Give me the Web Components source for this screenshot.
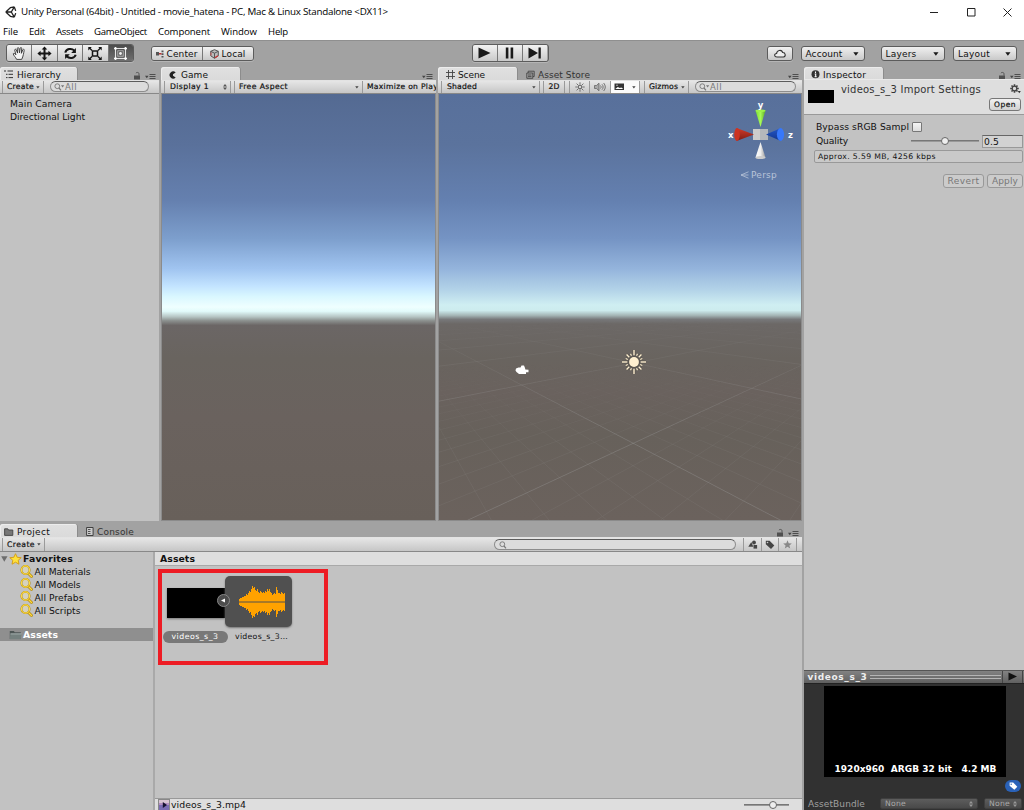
<!DOCTYPE html>
<html lang="en">
<head>
<meta charset="utf-8">
<title>Unity Personal (64bit)</title>
<style>
html,body{margin:0;height:100%;overflow:hidden;background:#a2a2a2}
</style>
</head>
<body>
<unity-app></unity-app>
<script>
const NS='*{box-sizing:border-box}';
function define(name,css,html,ready){
  const t=document.createElement('template');
  t.innerHTML='<style>'+NS+css+'</style>'+html;
  customElements.define(name,class extends HTMLElement{
    connectedCallback(){
      if(this.shadowRoot)return;
      this.attachShadow({mode:'open'}).appendChild(t.content.cloneNode(true));
      if(ready)ready(this,this.shadowRoot);
    }
  });
}

/* A label whose tracking is adjusted so that the text fills the width in "w". */
define('fit-text',`
:host{display:block;flex:none;white-space:nowrap;line-height:12px;height:12px;font-family:"DejaVu Sans",Verdana,sans-serif;font-size:9.3px;color:#111}
:host([semi]){-webkit-text-stroke:.2px currentColor}
:host([bold]){font-weight:700}
:host([win]){font-family:"Open Sans","Noto Sans",sans-serif}
span{display:inline-block}`,
'<span><slot></slot></span>',(el,r)=>{
  const s=el.getAttribute('s'),w=+el.getAttribute('w');
  if(s)el.style.fontSize=s+'px';
  if(w){
    el.style.width=w+'px';
    const sp=r.querySelector('span'),n=el.textContent.length;
    const nat=sp.getBoundingClientRect().width;
    if(nat>0)sp.style.letterSpacing=((w-nat)/n).toFixed(3)+'px';
  }
});

/* Icons: [width, height, markup] */
const ICONS={
unity:[12,12,'<path d="M.8 6 5.6 1.6M.8 6l4.8 4.4M.8 6H6.3M6.3 6 9.3.9M6.3 6l3 5.1M9.3.9 5.3 1.7M9.3.9l1.4 4M9.3 11.1l-4-.8M9.3 11.1l1.4-4" fill="none" stroke="#222" stroke-width="1.3"/>'],
hand:[15,15,'<path d="M4.6 13.4C3.700 11 1.300 9.600 1.300 7.700c.9-.9 1.900.1 2.600 1.100L2.700 4c.1-1 1.300-1 1.600-.1l1.300 3.200L5.300 2.400c.2-1 1.400-1 1.600 0l.6 4.400.7-4.700c.3-.9 1.500-.7 1.500.3l-.3 4.900 1.400-3.600c.5-.9 1.600-.4 1.400.6-.5 2.400-.9 5.900-2.500 9.100z" fill="#f4f4f4" stroke="#333" stroke-width=".9"/>'],
move:[15,15,'<path d="M7.5.4 10.300 3.600H8.500V6.500H11.400V4.700L14.600 7.500 11.400 10.300V8.500H8.500V11.400H10.300L7.500 14.600 4.700 11.400H6.500V8.500H3.600V10.300L.4 7.500 3.600 4.700V6.500H6.500V3.600H4.700z" fill="#151515"/>'],
rotate:[15,15,'<path d="M2.300 6.600C3.100 2.800 8.600 1.700 11.300 4.700M12.700 8.800C11.600 12.300 6.500 13.300 3.700 10.300" fill="none" stroke="#151515" stroke-width="2"/><path d="M12.900 2v5H8.200zM2.100 13V8.200h4.700z" fill="#151515"/>'],
scale:[16,15,'<rect x="5.500" y="5" width="5" height="5" fill="#ddd" stroke="#151515" stroke-width="1.500"/><path d="M2 1.500 5 4.500M14 1.500 11 4.500M2 13.500 5 10.500M14 13.500 11 10.500" stroke="#151515" stroke-width="1.300"/><path d="M1.300 1H4.800L1.300 4.500zM14.700 1H11.200L14.700 4.500zM1.300 14H4.800L1.300 10.500zM14.700 14H11.200L14.700 10.500z" fill="#151515"/>'],
rect:[15,15,'<path d="M2.500 1v13M12.500 1v13M1 2.500h13M1 12.500h13" stroke="#e6e6e6" stroke-width="1.100"/><rect x="4.800" y="4.800" width="5.400" height="5.400" fill="none" stroke="#bbb" stroke-width=".8"/><circle cx="7.500" cy="7.500" r="1.400" fill="#f2f2f2"/><g fill="#fff"><circle cx="2.500" cy="2.500" r="1.300"/><circle cx="12.500" cy="2.500" r="1.300"/><circle cx="2.500" cy="12.500" r="1.300"/><circle cx="12.500" cy="12.500" r="1.300"/></g>'],
center:[8,8,'<path d="M0 2h3v3.500H0z" fill="#555"/><path d="M5.500.5h2v1.800h-2zM5.500 3.200h2V5h-2zM5.500 6h2v1.500h-2z" fill="#555"/><path d="M3 3.700h2.500" stroke="#b33" stroke-width="1.500"/>'],
local:[9,10,'<path d="M4.500.7 8.300 2.300v4.500L4.500 9.300.7 6.800V2.300z" fill="#bbb" stroke="#555"/><path d="M.7 2.300 4.500 4.200 8.300 2.300M4.500 4.200v5" fill="none" stroke="#555"/><path d="M4.800 8.800 8 6.700" stroke="#c33" stroke-width="1.300"/><path d="M1 6.500v-3" stroke="#c55"/>'],
play:[13,12,'<path d="M.5.5 12.500 6 .5 11.500z" fill="#1a1a1a"/>'],
pause:[9,12,'<path d="M.8.500h2.600v11H.8zM5.600.500h2.600v11H5.600z" fill="#1a1a1a"/>'],
step:[14,12,'<path d="M.5.5 10 6 .5 11.500zM10.500.500h2.300v11h-2.300z" fill="#1a1a1a"/>'],
cloud:[12,9,'<path d="M3 8C0 8-.2 4.600 2.600 4.500 2.800 1 7.600.2 8.700 3.500 11.500 3.300 12.200 7.500 9.500 8z" fill="#eee" stroke="#333" stroke-width="1.100"/>'],
caret:[6,4,'<path d="M.3.2h5.200L2.900 3.800z" fill="#1a1a1a"/>'],
scaret:[4,3,'<path d="M.2.300h3.400L1.900 2.600z" fill="#444"/>'],
updown:[4,6,'<path d="M0 2.500h4L2 0zM0 3.500h4L2 6z" fill="#555"/>'],
updownl:[4,6,'<path d="M0 2.500h4L2 0zM0 3.500h4L2 6z" fill="#999"/>'],
lock:[8,9,'<path d="M1 4.500h6V8.500H1z" fill="#505050"/><path d="M6 4.700V2.700C6 1.200 3.500 1 2.900 2.200" fill="none" stroke="#555"/>'],
menu:[11,6,'<path d="M0 1.700h3.600L1.800 4.200z" fill="#444"/><path d="M4.500.5h6M4.500 2.500h6M4.500 4.500h6" stroke="#444" stroke-width=".9"/>'],
hier:[10,9,'<path d="M0 1h2M3.500 1H9M2 4.300h1.500M4.500 4.300H9M2 7.600h1.500M4.500 7.600H9" stroke="#333" stroke-width="1"/>'],
game:[8,8,'<path d="M6.700 1.400A3.600 3.600 0 1 0 6.700 6.600L4 4.800V3.200z" fill="#222"/>'],
scene:[9,9,'<path d="M2.500 0v9M6.500 0v9M0 2.500h9M0 6.500h9" stroke="#444" stroke-width=".9"/>'],
store:[9,9,'<path d="M.8 3h6v5.300h-6z" fill="none" stroke="#444" stroke-width=".9"/><path d="M2.200 3V1.200h6V6.500H7M2 5h3.500M2 6.600h3.500" fill="none" stroke="#444" stroke-width=".9"/>'],
info:[9,9,'<circle cx="4.500" cy="4.300" r="4" fill="#333"/><path d="M4.500 1.600v1.300M3.700 4h1v2.700M3.500 6.700h2.200" stroke="#fff" stroke-width="1.100" fill="none"/>'],
folder:[10,8,'<path d="M.6 7.400V.8h3.200l.7 1.200h4.300v5.400z" fill="#777" stroke="#444" stroke-width=".9"/>'],
bfolder:[13,10,'<path d="M.8 9V1h4l1 1.300h6V9z" fill="#4d5655"/><path d="M.8 9.300 1.300 3.800h11.300L11.800 9.300z" fill="#74807e"/><path d="M1.500 3.900h11" stroke="#a7b0af"/>'],
console:[8,9,'<path d="M.6.5h6.500v8H.6z" fill="#ccc" stroke="#333" stroke-width=".9"/><path d="M2 2.500h2.500M2 4.500h2.500M2 6.500h2.500" stroke="#444" stroke-width=".9"/>'],
search:[11,8,'<circle cx="3.300" cy="3.200" r="2.400" fill="none" stroke="#777" stroke-width=".9"/><path d="M5 5 7 7.300" stroke="#777" stroke-width="1.200"/><path d="M7 2.300h3.200L8.600 4.600z" fill="#777"/>'],
search1:[8,8,'<circle cx="3.300" cy="3.200" r="2.400" fill="none" stroke="#777" stroke-width=".9"/><path d="M5 5 7 7.300" stroke="#777" stroke-width="1.200"/>'],
sun:[10,10,'<circle cx="5" cy="5" r="1.900" fill="none" stroke="#555"/><path d="M5 .3v2M5 7.700v2M.3 5h2M7.700 5h2M1.600 1.600l1.500 1.500M6.900 6.900l1.500 1.500M8.400 1.600 6.900 3.100M3.100 6.900 1.600 8.400" stroke="#555" stroke-width=".8"/>'],
audio:[12,10,'<path d="M.5 3.500h2L5 1.200v7.600L2.500 6.500h-2z" fill="#aaa" stroke="#666" stroke-width=".8"/><path d="M6.500 3.500c.8 1 .8 2 0 3M8 2.300c1.500 1.800 1.500 3.600 0 5.400M9.600 1c2.200 2.600 2.200 5.400 0 8" fill="none" stroke="#666" stroke-width=".9"/>'],
image:[11,8,'<path d="M.5.500h9.500v6.500H.5z" fill="#333"/><path d="M1.300 6 3.800 4l2 1 1.500-.6 2 1.600z" fill="#fff"/><circle cx="3" cy="2.200" r=".7" fill="#ddd"/>'],
gear:[11,10,'<path d="M4.500.2v8.600M.2 4.500h8.600M1.500 1.500l6 6M7.500 1.500l-6 6" stroke="#444" stroke-width="1.600"/><circle cx="4.500" cy="4.500" r="2.300" fill="#ddd" stroke="#444" stroke-width="1.300"/><path d="M7.800 7h3L9.300 9.300z" fill="#333"/>'],
shapes:[10,9,'<path d="M.3 6.700 3.300 2l2 4.700z" fill="#444"/><circle cx="6" cy="2.500" r="1.900" fill="#444"/><path d="M5.500 5h3.600v3.600H5.500z" fill="#444"/>'],
tag:[10,10,'<path d="M.8.800h3.800L9.300 5.500 6 9 .8 4.300z" fill="#444"/><circle cx="2.500" cy="2.500" r=".8" fill="#ccc"/>'],
wtag:[9,9,'<path d="M.6.600h3.600L8.300 4.700 5.300 7.800.6 3.800z" fill="#fff"/><circle cx="2.200" cy="2.200" r=".7" fill="#2a62b8"/>'],
gstar:[9,9,'<path d="M4.500.3 5.700 3.200 8.800 3.400 6.400 5.400 7.200 8.500 4.500 6.800 1.800 8.500 2.600 5.400.2 3.400 3.300 3.200z" fill="#888"/>'],
star:[13,12,'<path d="M6.500.7 8.200 4.300 12.200 4.700 9.200 7.300 10 11.200 6.500 9.200 3 11.200 3.800 7.300.8 4.700 4.800 4.300z" fill="#ffe23c" stroke="#d29a12" stroke-width=".9"/>'],
fold:[7,6,'<path d="M.2.300h6.300L3.300 5.700z" fill="#6d6d6d"/>'],
mag:[13,13,'<path d="M8 8l3.500 3.500" stroke="#b28a12" stroke-width="2.800" stroke-linecap="round"/><path d="M8 8l3.500 3.500" stroke="#ffd93a" stroke-width="1.300" stroke-linecap="round"/><circle cx="5.500" cy="5" r="4.100" fill="#d6d2bd" stroke="#b08a14" stroke-width="1.900"/><circle cx="5.500" cy="5" r="4.100" fill="none" stroke="#ffdb3c" stroke-width="1.100"/>'],
movie:[12,12,'<path d="M0 0h12v12H0z" fill="#888"/><path d="M1 1h10v10H1z" fill="#7b6db4"/><path d="M1 1h10v4H1z" fill="#d8c3d2"/><path d="M1 4h10v2H1z" fill="#b48fc0"/><path d="M4.800 3v6L9 6z" fill="#151030"/>'],
persp:[9,8,'<path d="M8.500.8 1 4l7.500 3.200M1 4h7.500" stroke="#b9c4d8" stroke-width=".8" fill="none"/>'],
min:[9,9,'<path d="M0 4.500h8" stroke="#222"/>'],
max:[9,9,'<path d="M.5.500h7.500V8H.5z" fill="none" stroke="#222"/>'],
close:[9,9,'<path d="M.5.500l8 8M8.500.500l-8 8" stroke="#222"/>']
};
define('ui-icon',':host{display:block;flex:none;line-height:0}svg{display:block;overflow:visible}','<div></div>',(el,r)=>{
  const [w,h,m]=ICONS[el.getAttribute('n')];
  r.querySelector('div').innerHTML=`<svg width="${w}" height="${h}" viewBox="0 0 ${w} ${h}">${m}</svg>`;
});

define('title-bar',`
:host{display:flex;height:24px;background:#fff;align-items:center;padding:0 12px 0 5px}
fit-text{margin-left:4px;color:#000}
.sp{flex:1}.btns{display:flex;gap:27.500px}`,
`<ui-icon n="unity"></ui-icon><fit-text win s="9.8" w="367">Unity Personal (64bit) - Untitled - movie_hatena - PC, Mac &amp; Linux Standalone &lt;DX11&gt;</fit-text>
<div class="sp"></div><div class="btns"><ui-icon n="min"></ui-icon><ui-icon n="max"></ui-icon><ui-icon n="close"></ui-icon></div>`);

define('menu-bar',`
:host{display:flex;height:16px;background:#fff;padding:2px 0 0 3px}
fit-text{margin-right:11px;color:#000}`,
['File:15','Edit:16','Assets:27','GameObject:53','Component:52','Window:36','Help:20'].map(s=>{const[a,b]=s.split(':');return `<fit-text win s="9.6" w="${b}">${a}</fit-text>`}).join(''));

/* Raised button, joined into groups by <button-group>. */
define('tool-button',`
:host{display:flex;align-items:center;justify-content:center;gap:3px;background:linear-gradient(#f2f2f2,#c9c9c9);border-right:1px solid #777;height:100%}
:host(:last-child){border-right:0}
:host([on]){background:linear-gradient(#4c4c4c,#6f6f6f)}`,'<slot></slot>');
define('button-group',`
:host{display:flex;flex:none;border:1px solid #5c5c5c;border-radius:3px;overflow:hidden;box-shadow:0 1px 0 #b5b5b5}
::slotted(*){flex:1}`,'<slot></slot>');
define('drop-button',`
:host{display:flex;flex:none;align-items:center;justify-content:space-between;height:15px;border:1px solid #5c5c5c;border-radius:3px;background:linear-gradient(#f0f0f0,#c9c9c9);padding:0 5px 0 4px}`,
'<slot></slot><ui-icon n="caret"></ui-icon>');

define('tool-bar',`
:host{display:flex;height:26px;background:#a2a2a2;border-top:1px solid #8f8f8f;align-items:flex-start;padding:3px 7px 0 6px}
.t{width:128px;height:18px}.p{width:103px;height:15px;margin:2px 0 0 16.500px}.q{width:77px;height:18px;margin-left:218px}
.c{width:26px;height:15px;margin:2px 8px 0 218px}
.p tool-button:first-child{flex:0 0 51px}
drop-button{margin-top:2px;width:64px}drop-button+drop-button{margin-left:16px}drop-button:last-child{margin-left:8.500px}`,
`<button-group class="t"><tool-button><ui-icon n="hand"></ui-icon></tool-button><tool-button><ui-icon n="move"></ui-icon></tool-button><tool-button><ui-icon n="rotate"></ui-icon></tool-button><tool-button><ui-icon n="scale"></ui-icon></tool-button><tool-button on><ui-icon n="rect"></ui-icon></tool-button></button-group>
<button-group class="p"><tool-button><ui-icon n="center"></ui-icon><fit-text w="31" s="9">Center</fit-text></tool-button><tool-button><ui-icon n="local"></ui-icon><fit-text w="24" s="9">Local</fit-text></tool-button></button-group>
<button-group class="q"><tool-button><ui-icon n="play"></ui-icon></tool-button><tool-button><ui-icon n="pause"></ui-icon></tool-button><tool-button><ui-icon n="step"></ui-icon></tool-button></button-group>
<button-group class="c"><tool-button><ui-icon n="cloud"></ui-icon></tool-button></button-group>
<drop-button><fit-text w="37" s="9">Account</fit-text></drop-button><drop-button><fit-text w="31" s="9">Layers</fit-text></drop-button><drop-button><fit-text w="32" s="9">Layout</fit-text></drop-button>`);

/* Docked panel: a row of tabs with its own small actions, and a body. */
define('dock-panel',`
:host{display:flex;flex-direction:column;min-width:0;min-height:0;overflow:hidden}
.tabs{display:flex;height:13px;flex:none;align-items:stretch;padding-right:3px}
.sp{flex:1}.act{display:flex;align-items:flex-end;gap:4px}
::slotted([slot=body]){flex:1;min-height:0}`,
`<div class="tabs"><slot name="tab"></slot><div class="sp"></div><div class="act"><slot name="act"></slot></div></div><slot></slot><slot name="body"></slot>`);
define('dock-tab',`
:host{display:flex;align-items:center;gap:3px;padding:2px 0 0 4px;flex:none}
:host([on]){background:linear-gradient(#e0e0e0,#dadada);border-radius:3px 3px 0 0;box-shadow:inset 1px 1px 0 #ececec, 1px 0 0 #8c8c8c}`,'<slot></slot>');

define('tool-strip',`
:host{display:flex;flex:none;height:15px;background:linear-gradient(#e6e6e6,#c6c6c6);border-top:1px solid #e3e3e3;border-bottom:1px solid #888;align-items:stretch;overflow:hidden}`,'<slot></slot>');
define('strip-item',`
:host{display:flex;flex:none;align-items:center;justify-content:space-between;border-right:1px solid #9a9a9a;padding:0 3px 0 5px;overflow:hidden}
:host([mid]){justify-content:center;padding:0}
:host([on]){background:#fbfbfb}
:host([end]){border-right:0}`,'<slot></slot>');
define('search-field',`
:host{display:flex;flex:none;height:11px;border:1px solid #8d8d8d;border-top-color:#5c5c5c;border-radius:6px;background:#dcdcdc;align-items:center;padding-left:3px;margin-top:1px}`,'<slot></slot>');

define('hierarchy-list',`
:host{display:block;background:#c2c2c2;padding:3.500px 0 0 10px}
fit-text{height:13px;line-height:13px}`,
`<fit-text w="62" s="9.200">Main Camera</fit-text><fit-text w="75" s="9.200">Directional Light</fit-text>`);

define('game-view',`
:host{display:block;border:1px solid #8b8b8b;border-top:0;background:linear-gradient(#546a92 0,#5a719b 12%,#6580af 25%,#7d9fcd 34%,#a0c4f0 41%,#c2e3ff 45%,#d9f7ff 47.500%,#efffff 50%,#e2fbfb 51%,#b5c4c3 52.300%,#8c918f 53.200%,#6b6665 54.300%,#69645f 62%,#6a625e 76%,#68605a 100%)}`,'');

define('scene-view',`
:host{display:block;position:relative;border:1px solid #8b8b8b;border-top:0;overflow:hidden;background:linear-gradient(#58709b 0,#5b739d 12%,#6480b0 25%,#7594c4 34%,#94b4dc 41%,#b3d3e8 46%,#cfeef2 49.500%,#cdecee 50.800%,#a3b4b4 52%,#77787a 52.900%,#6c6866 54%,#69645f 62%,#6a625e 70%,#67615b 80%,#6b625d 100%)}
#grid{position:absolute;left:0;top:0}
#gizmo{position:absolute;right:5px;top:7px}
#sun{position:absolute;left:182px;top:255px}
#cam{position:absolute;left:76px;top:271px}
.persp{position:absolute;right:24px;top:75px;display:flex;align-items:center;gap:2px}
.persp fit-text{color:#b9c4d8}`,
`<svg id="grid" width="362" height="427"><defs><linearGradient id="f" gradientUnits="userSpaceOnUse" x1="0" y1="225" x2="0" y2="427"><stop offset="0" stop-color="#fff" stop-opacity="0"/><stop offset=".15" stop-color="#fff" stop-opacity=".35"/><stop offset=".5" stop-color="#fff"/></linearGradient><linearGradient id="f2" gradientUnits="userSpaceOnUse" x1="0" y1="270" x2="0" y2="360"><stop offset="0" stop-color="#fff" stop-opacity="0"/><stop offset="1" stop-color="#fff"/></linearGradient><mask id="m" maskUnits="userSpaceOnUse" x="0" y="0" width="362" height="427"><rect width="362" height="427" fill="url(#f)"/></mask><mask id="m2" maskUnits="userSpaceOnUse" x="0" y="0" width="362" height="427"><rect width="362" height="427" fill="url(#f2)"/></mask></defs>
<g mask="url(#m)"><path id="major" fill="none" stroke="#a2a4a3" stroke-opacity=".24"/></g><g mask="url(#m2)"><path id="minor" fill="none" stroke="#a2a4a3" stroke-opacity=".1"/></g></svg>
<svg id="gizmo" width="70" height="62" viewBox="0 0 70 62">
<defs><linearGradient id="gg"><stop offset="0" stop-color="#7ade32"/><stop offset=".5" stop-color="#a6f958"/><stop offset="1" stop-color="#5dac26"/></linearGradient><linearGradient id="gw"><stop offset="0" stop-color="#fff"/><stop offset=".5" stop-color="#eee"/><stop offset="1" stop-color="#999"/></linearGradient><linearGradient id="gr" x2="0" y2="1"><stop offset="0" stop-color="#d33a28"/><stop offset="1" stop-color="#7b1c14"/></linearGradient><linearGradient id="gb" x2="0" y2="1"><stop offset="0" stop-color="#2457c8"/><stop offset="1" stop-color="#12358c"/></linearGradient></defs>
<rect x="27" y="28" width="15" height="11" fill="#ccc"/><path d="M34 28h8v11h-8z" fill="#b4b7bb"/>
<path d="M10.500 27 28 33.500 10.500 40z" fill="url(#gr)"/><ellipse cx="11" cy="33.500" rx="2.800" ry="6.500" fill="#cc3322"/>
<path d="M55 27 40 33.500 55 40z" fill="url(#gb)"/><ellipse cx="54.500" cy="33.500" rx="3.600" ry="6.500" fill="#3778fb"/>
<path d="M29.500 9.500h10L34.500 26z" fill="url(#gg)"/><ellipse cx="34.500" cy="9.700" rx="5" ry="1.300" fill="#9cf04c"/>
<path d="M34.500 41 39.500 56.500h-10z" fill="url(#gw)"/><ellipse cx="34.500" cy="56.500" rx="5" ry="1.500" fill="#ccc"/>
<g font-family="DejaVu Sans" font-weight="700" font-size="8.500" fill="#fff"><text x="31.800" y="7">y</text><text x="2" y="36.500">x</text><text x="62" y="36.500">z</text></g></svg>
<div class="persp"><ui-icon n="persp"></ui-icon><fit-text w="26" s="9">Persp</fit-text></div>
<svg id="cam" width="14" height="11"><path d="M1 3.500 3.500 2.500 5.500 2.500 6.500.5H9l1 2.500.3 1.500 3.200.2v2.500h-2.500v1.700H4L1.500 7 .5 5.500z" fill="#fff"/></svg>
<svg id="sun" width="26" height="26" viewBox="-13 -13 26 26"><g id="rays"></g><circle r="6" fill="#57534d"/><circle r="4.900" fill="#fff0d0"/></svg>`,
(el,r)=>{
  /* Project a ground plane from the screen positions of one of its large squares. */
  const O=[439,94],q=[[633.3,443.3],[521.7,385],[634.3,363],[751.7,388.3]].map(p=>[p[0]-O[0],p[1]-O[1]]);
  const [a,b,c,d]=q,dx1=b[0]-c[0],dx2=d[0]-c[0],dx3=a[0]-b[0]+c[0]-d[0],dy1=b[1]-c[1],dy2=d[1]-c[1],dy3=a[1]-b[1]+c[1]-d[1];
  const det=dx1*dy2-dx2*dy1,g=(dx3*dy2-dx2*dy3)/det,h=(dx1*dy3-dx3*dy1)/det;
  const P=(u,v)=>{const w=g*u+h*v+1;return w<.06?null:[((b[0]-a[0]+g*b[0])*u+(d[0]-a[0]+h*d[0])*v+a[0])/w,((b[1]-a[1]+g*b[1])*u+(d[1]-a[1]+h*d[1])*v+a[1])/w];};
  const run=(step,lo,hi)=>{let s='';for(let k=Math.round(lo/step);k<=hi/step;k++){for(const f of [t=>P(k*step,t),t=>P(t,k*step)]){let pen=false;for(let t=-3;t<=10;t+=.05){const p=f(t);if(p&&p[1]>215&&Math.abs(p[0])<3000&&p[1]<1500){s+=(pen?'L':'M')+p[0].toFixed(1)+' '+p[1].toFixed(1);pen=true}else pen=false}}}return s};
  r.querySelector('#major').setAttribute('d',run(1,-1,6));
  r.querySelector('#minor').setAttribute('d',run(.1,-1,2));
  let s='';for(const [w,col] of [[2.8,'#57534d'],[1.4,'#fff0d0']])for(let i=0;i<16;i++){const A=i*Math.PI/8,R=i%4===0?12:i%2===0?10.5:9;s+=`<line stroke="${col}" stroke-width="${i%2?w*.85:w}" x1="${Math.cos(A)*6.700}" y1="${Math.sin(A)*6.700}" x2="${Math.cos(A)*R}" y2="${Math.sin(A)*R}"/>`}
  r.querySelector('#rays').innerHTML=s;
});

define('project-tree',`
:host{display:block;background:#c2c2c2;border-right:2px solid #a9a9a9}
.r{display:flex;align-items:center;height:13px}
.f{padding-left:1px;gap:1px}.s{padding-left:20px;gap:1.500px}
.sel{margin-top:11px;height:13px;background:#8f8f8f;padding-left:9px;gap:1px}.sel fit-text{color:#fff}`,
`<div class="r f"><ui-icon n="fold"></ui-icon><ui-icon n="star"></ui-icon><fit-text bold w="50" s="9.300">Favorites</fit-text></div>
<div class="r s"><ui-icon n="mag"></ui-icon><fit-text w="56" s="9.200">All Materials</fit-text></div>
<div class="r s"><ui-icon n="mag"></ui-icon><fit-text w="46" s="9.200">All Models</fit-text></div>
<div class="r s"><ui-icon n="mag"></ui-icon><fit-text w="49" s="9.200">All Prefabs</fit-text></div>
<div class="r s"><ui-icon n="mag"></ui-icon><fit-text w="46" s="9.200">All Scripts</fit-text></div>
<div class="r sel"><ui-icon n="bfolder"></ui-icon><fit-text bold w="35" s="9.300">Assets</fit-text></div>`);

define('range-slider',`
:host{display:flex;align-items:center;height:10px;position:relative}
i{flex:1;height:2px;background:#777;border-bottom:1px solid #999}
b{position:absolute;left:50%;top:1px;width:8px;height:8px;margin-left:-4px;border-radius:50%;border:1px solid #666;background:#eee}
:host([late]) b{left:65%}`,'<i></i><b></b>');

define('asset-browser',`
:host{display:flex;flex-direction:column;background:#c2c2c2}
.h{height:14px;flex:none;background:#dedede;border-bottom:1px solid #a9a9a9;padding:1px 0 0 5px}
.g{flex:1;padding:3px 0 0 2.500px}
.mark{width:170px;height:96px;border:4px solid #ed1c24;padding:3px 0 0 1px;display:grid;grid-template-columns:64px 66px;grid-template-rows:53px 14px;position:relative}
.v{width:58px;height:30px;background:#000;align-self:center;margin-left:4px;box-shadow:0 1px 2px #777}
.a{width:67px;height:51px;border-radius:5px;background:#505050;box-shadow:0 1px 2px #777;display:flex;align-items:center;justify-content:center;margin-left:-1.500px;padding-left:7px}
.k{position:absolute;left:55px;top:21px;width:13px;height:13px;border-radius:50%;background:#4d4d4d;border:1px solid #888}
.k svg{display:block}
.n{width:65px;height:12px;border-radius:6px;background:#787878;margin-top:2px;display:flex;justify-content:center}
.n fit-text{color:#fff}
.m{margin:2px 0 0 8.500px}
.s{height:12px;flex:none;background:#dedede;border-top:1px solid #999;display:flex;align-items:flex-start;padding:0 13px 0 3px;gap:1px}
.s div{flex:1}range-slider{width:45px;margin-top:1px}`,
`<div class="h"><fit-text bold w="35" s="9.300">Assets</fit-text></div>
<div class="g"><div class="mark"><div class="v"></div><div class="a"><svg width="46" height="34"><path id="w" fill="#ffa200"/><path d="M0 17h46" stroke="#505050"/></svg></div>
<div class="n"><fit-text w="47" s="7.800">videos_s_3</fit-text></div><fit-text class="m" w="53" s="7.800">videos_s_3…</fit-text>
<div class="k"><svg width="11" height="11"><path d="M3 5.500 7 3.500v4z" fill="#fff"/></svg></div></div></div>
<div class="s"><ui-icon n="movie"></ui-icon><fit-text w="75" s="9.300">videos_s_3.mp4</fit-text><div></div><range-slider late></range-slider></div>`,
(el,r)=>{
  const h=[3,4,4,5,5,6,6,8,7,9,11,10,13,16,14,15,12,11,13,10,9,11,10,9,10,9,11,10,13,11,13,10,9,7,8,9,8,15,12,9,9,8,10,9,8,9];
  let up='M0 17',dn='';
  h.forEach((v,i)=>{up+=`V${17-v}H${i+1}`});
  [...h].reverse().forEach((v,i)=>{dn+=`V${17+v}H${45-i}`});
  r.querySelector('#w').setAttribute('d',up+dn+'Z');
});

define('import-inspector',`
:host{display:flex;flex-direction:column;background:#c2c2c2}
.h{height:36px;flex:none;background:#dedede;border-bottom:1px solid #999;border-top:1px solid #e9e9e9;display:flex;padding:4px 3px 0 4px}
.th{width:26px;height:13px;background:#000;margin:6px 7px 0 0}
.h fit-text.t{color:#333}.h .sp{flex:1}
.r{display:flex;flex-direction:column;align-items:flex-end;gap:4px}
.btn{border:1px solid #777;border-radius:3px;background:linear-gradient(#f2f2f2,#d2d2d2);height:13px;display:flex;align-items:center;justify-content:center}
.open{width:32px}
.b{padding:4px 1px 0 12px;flex:1}
.l{display:flex;align-items:center;height:15px}
.cb{width:10px;height:10px;border:1px solid #777;border-radius:1px;background:linear-gradient(#f5f5f5,#ddd);margin-left:3px}
range-slider{width:68px;margin-left:63px}
.num{width:41px;height:13px;margin-left:3px;border:1px solid #999;border-top-color:#666;background:#d2d2d2;padding-left:1px}
.help{height:13px;border:1px solid #999;border-radius:2px;background:#c9c9c9;margin:2px 0 0 -2px;padding:0 0 0 3px}
.a{display:flex;justify-content:flex-end;gap:3px;margin-top:11px}.a .btn{background:#cbcbcb;border-color:#999;height:14px}.a fit-text{color:#777}`,
`<div class="h"><div class="th"></div><fit-text class="t" w="140" s="10">videos_s_3 Import Settings</fit-text><div class="sp"></div><div class="r"><ui-icon n="gear"></ui-icon><div class="btn open"><fit-text semi w="22" s="7.500">Open</fit-text></div></div></div>
<div class="b"><div class="l"><fit-text w="93" s="9.200">Bypass sRGB Sampl</fit-text><div class="cb"></div></div>
<div class="l" style="height:14px"><fit-text w="32" s="9.200">Quality</fit-text><range-slider></range-slider><div class="num"><fit-text w="15" s="9.200">0.5</fit-text></div></div>
<div class="help"><fit-text w="118" s="7.700">Approx. 5.59 MB, 4256 kbps</fit-text></div>
<div class="a"><div class="btn" style="width:41px"><fit-text w="32" s="9">Revert</fit-text></div><div class="btn" style="width:36px"><fit-text w="26" s="9">Apply</fit-text></div></div></div>`);

define('asset-preview',`
:host{display:flex;flex-direction:column;flex:none;height:140px;background:#313131}
.h{height:14px;flex:none;background:linear-gradient(#828282,#606060);display:flex;align-items:center;padding-left:3.500px;border-top:1px solid #555;border-bottom:1px solid #222}
.h fit-text{color:#eee}.ln{width:131px;height:4px;border-top:1px solid #b5b5b5;border-bottom:1px solid #b5b5b5;margin-left:2px}
.pl{margin-left:1px;border-left:1px solid #444;border-right:1px solid #444;width:21px;height:12px;padding:1px 0 0 5px}
.v{width:182px;height:91px;background:#000;margin:2px 0 0 19.500px;display:flex;align-items:flex-end;padding:0 0 2px 11px}
.v fit-text{color:#fff;white-space:pre}
.tag{align-self:flex-end;width:16px;height:12px;border-radius:6px;background:#2a62b8;margin:3px 3px 0 0;display:flex;align-items:center;justify-content:center}
.f{display:flex;margin-top:6px;padding-left:4px}.f>fit-text{color:#a0a0a0}
.d{height:11px;border:1px solid #3f3f3f;border-radius:2px;background:linear-gradient(#5d5d5d,#494949);display:flex;align-items:center;justify-content:space-between;padding:0 4px}
.d fit-text{color:#aaa}`,
`<div class="h"><fit-text bold w="60" s="9">videos_s_3</fit-text><div class="ln"></div><div class="pl"><svg width="10" height="10" style="display:block"><path d="M.5.500 9 4.500.5 8.500z" fill="#111"/></svg></div></div>
<div class="v"><fit-text bold w="162" s="9">1920x960  ARGB 32 bit   4.2 MB</fit-text></div>
<div class="tag"><ui-icon n="wtag"></ui-icon></div>
<div class="f"><fit-text w="57" s="9">AssetBundle</fit-text><div class="d" style="width:98px;margin-left:15px"><fit-text w="21" s="7.700">None</fit-text><ui-icon n="updownl"></ui-icon></div><div class="d" style="width:38px;margin-left:6px"><fit-text w="21" s="7.700">None</fit-text><ui-icon n="updownl"></ui-icon></div></div>`);

define('unity-app',`
:host{display:flex;flex-direction:column;width:1024px;height:810px;background:#a2a2a2;overflow:hidden}
main{flex:1;min-height:0;display:grid;grid-template-columns:802px 220px;column-gap:2px;padding-top:1px}
.left{display:grid;grid-template-rows:454px 286px;row-gap:3px;min-height:0}
.top{display:grid;grid-template-columns:159px 275px 364px;column-gap:2px;min-height:0}
.right{display:flex;flex-direction:column;min-height:0}
.right dock-panel{flex:1}
.split{display:grid;grid-template-columns:155px 1fr;min-height:0}
.pad{width:3px;padding:0}
search-field fit-text{color:#777}`,
`<title-bar></title-bar><menu-bar></menu-bar><tool-bar></tool-bar>
<main><div class="left"><div class="top">
<dock-panel><dock-tab slot="tab" on style="width:77px"><ui-icon n="hier"></ui-icon><fit-text w="44" s="9">Hierarchy</fit-text></dock-tab><ui-icon slot="act" n="lock"></ui-icon><ui-icon slot="act" n="menu"></ui-icon>
<tool-strip style="height:14px"><strip-item class="pad"></strip-item><strip-item style="width:41px;padding-left:4px"><fit-text semi w="27" s="7.700">Create</fit-text><ui-icon n="scaret"></ui-icon></strip-item><search-field style="width:99px;margin-left:6px;margin-top:0"><ui-icon n="search"></ui-icon><fit-text w="12" s="8.500">All</fit-text></search-field></tool-strip><hierarchy-list slot="body" style="margin-top:-.5px"></hierarchy-list></dock-panel>
<dock-panel><dock-tab slot="tab" on style="width:79px;padding-left:8px;gap:4px"><ui-icon n="game"></ui-icon><fit-text w="27" s="9">Game</fit-text></dock-tab><ui-icon slot="act" n="menu"></ui-icon>
<tool-strip style="height:14px"><strip-item class="pad" style="width:4px"></strip-item><strip-item style="width:66px"><fit-text semi w="39" s="7.700">Display 1</fit-text><ui-icon n="updown"></ui-icon></strip-item><strip-item class="pad" style="width:4px"></strip-item><strip-item style="width:128px;padding-left:4px"><fit-text semi w="49" s="7.700">Free Aspect</fit-text><ui-icon n="scaret"></ui-icon></strip-item><strip-item end style="width:73px;padding:0 0 0 4px"><fit-text semi w="71" s="7.600">Maximize on Play</fit-text></strip-item></tool-strip><game-view slot="body"></game-view></dock-panel>
<dock-panel><dock-tab slot="tab" on style="width:79px;padding-left:8px"><ui-icon n="scene"></ui-icon><fit-text w="27" s="9">Scene</fit-text></dock-tab><dock-tab slot="tab" style="padding-left:9px"><ui-icon n="store"></ui-icon><fit-text w="52" s="9" style="color:#333">Asset Store</fit-text></dock-tab><ui-icon slot="act" n="menu"></ui-icon>
<tool-strip style="height:14px"><strip-item class="pad" style="width:4px"></strip-item><strip-item style="width:98px"><fit-text semi w="30" s="7.700">Shaded</fit-text><ui-icon n="scaret"></ui-icon></strip-item><strip-item class="pad" style="width:4px"></strip-item><strip-item mid style="width:21px"><fit-text semi w="11" s="7.700">2D</fit-text></strip-item><strip-item class="pad" style="width:5px"></strip-item><strip-item mid style="width:20px"><ui-icon n="sun"></ui-icon></strip-item><strip-item mid style="width:21px"><ui-icon n="audio"></ui-icon></strip-item><strip-item on mid style="width:29px;gap:7px"><ui-icon n="image"></ui-icon><ui-icon n="scaret"></ui-icon></strip-item><strip-item class="pad" style="width:5px"></strip-item><strip-item style="width:44px;padding:0 3px 0 4px"><fit-text semi w="29" s="7.700">Gizmos</fit-text><ui-icon n="scaret"></ui-icon></strip-item><search-field style="width:101px;margin-left:6px;margin-top:0"><ui-icon n="search"></ui-icon><fit-text w="12" s="8.500">All</fit-text></search-field></tool-strip><scene-view slot="body"></scene-view></dock-panel>
</div>
<dock-panel><dock-tab slot="tab" on style="width:77px"><ui-icon n="folder"></ui-icon><fit-text w="33" s="9">Project</fit-text></dock-tab><dock-tab slot="tab" style="padding-left:9px"><ui-icon n="console"></ui-icon><fit-text w="37" s="9" style="color:#333">Console</fit-text></dock-tab><ui-icon slot="act" n="lock"></ui-icon><ui-icon slot="act" n="menu"></ui-icon>
<tool-strip><strip-item class="pad"></strip-item><strip-item style="width:42px;padding-left:4px"><fit-text semi w="28" s="7.700">Create</fit-text><ui-icon n="scaret"></ui-icon></strip-item><search-field style="width:242px;margin-left:449px;padding-left:4px"><ui-icon n="search1"></ui-icon></search-field><strip-item class="pad" style="width:8px"></strip-item><strip-item mid style="width:18px"><ui-icon n="shapes"></ui-icon></strip-item><strip-item mid style="width:17px"><ui-icon n="tag"></ui-icon></strip-item><strip-item mid style="width:18px"><ui-icon n="gstar"></ui-icon></strip-item></tool-strip>
<div slot="body" class="split"><project-tree></project-tree><asset-browser></asset-browser></div></dock-panel></div>
<div class="right"><dock-panel><dock-tab slot="tab" on style="width:79px;padding-left:7px;gap:3px"><ui-icon n="info"></ui-icon><fit-text w="43" s="9">Inspector</fit-text></dock-tab><ui-icon slot="act" n="lock"></ui-icon><ui-icon slot="act" n="menu"></ui-icon><import-inspector slot="body" style="margin-top:-1px"></import-inspector></dock-panel><asset-preview></asset-preview></div></main>`);
</script>
</body>
</html>
